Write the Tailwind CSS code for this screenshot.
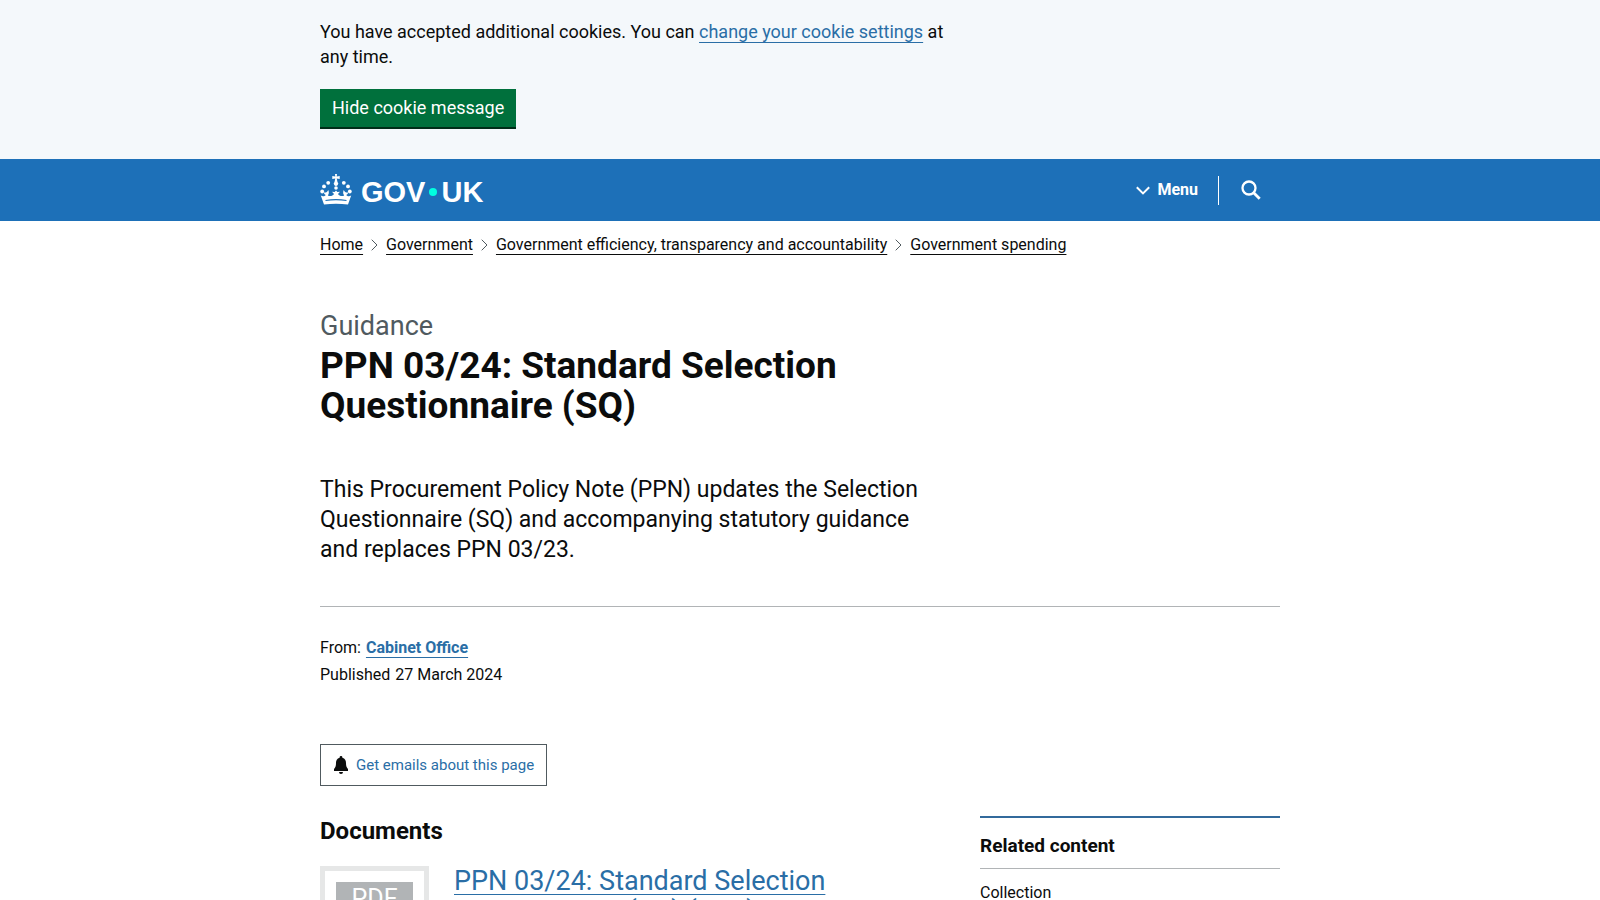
<!DOCTYPE html>
<html lang="en">
  <head>
    <meta charset="UTF-8" />
    <meta name="viewport" content="width=device-width, initial-scale=1.0" />
    <title>PPN 03/24: Standard Selection Questionnaire (SQ) - GOV.UK</title>
    <script src="https://cdn.jsdelivr.net/npm/@tailwindcss/browser@4"></script>
  </head>
  <body class="h-screen overflow-hidden bg-white font-['Roboto','Noto_Sans',sans-serif] text-[#0b0c0c]">
    <!-- Cookie banner -->
    <section class="bg-[#f4f8fb] pt-[19px] pb-8" aria-label="Cookies on GOV.UK">
      <div class="max-w-[960px] mx-auto">
        <p class="max-w-[640px] mb-5 text-lg leading-[25px]">
          You have accepted additional cookies. You can
          <a href="#" class="text-[#2a6ea6] underline decoration-1 underline-offset-4">change your cookie settings</a>
          at any time.
        </p>
        <button type="button" class="block h-[38px] px-3 pb-[2px] bg-[#00703c] text-white text-lg leading-[19px] shadow-[0_2px_0_#002d18]">
          Hide cookie message
        </button>
      </div>
    </section>

    <!-- Header -->
    <header class="bg-[#1d70b8] text-white">
      <div class="max-w-[960px] h-[62px] mx-auto flex items-center justify-between">
        <a href="#" class="flex items-center" aria-label="GOV.UK">
          <svg class="w-8 h-8 mr-[9px]" viewBox="0 0 32 32" fill="currentColor" aria-hidden="true">
            <circle cx="2.2" cy="17.5" r="1.9" />
            <circle cx="4" cy="12.4" r="1.9" />
            <circle cx="8.2" cy="8.8" r="1.9" />
            <circle cx="23.8" cy="8.8" r="1.9" />
            <circle cx="28" cy="12.4" r="1.9" />
            <circle cx="29.8" cy="17.5" r="1.9" />
            <path d="M15 0h2l-.3 2.500 3-.5v3l-3-.5.8 3.500a2.200 2.200 0 1 1-3 0l.8-3.500-3 .5V2l3 .5z" />
            <circle cx="16" cy="14" r="1.800" />
            <path d="M.8 21.500c2 1.200 3.800.8 5-.6-1.200-.4-1.800-1.200-2-2.400 2.200.3 3.700-.6 4.500-2.500 1 2.600.6 4-.5 5.500 2.500 1.200 4.700.6 6.200-1.500l-2-2.200 2.600.2L16 16.600l1.400 1.400 2.600-.2-2 2.200c1.500 2.100 3.700 2.700 6.200 1.500-1.100-1.500-1.500-2.900-.5-5.500.8 1.900 2.300 2.800 4.500 2.500-.2 1.200-.8 2-2 2.400 1.200 1.400 3 1.800 5 .6L28 30.500q-12-1.600-24 0z" />
            <path d="M5.500 26.500q10.500-1.800 21 0" fill="none" stroke="#1d70b8" stroke-width="1.200" />
          </svg>
          <span class="flex items-center pt-1 font-['Liberation_Sans',Arial,sans-serif] font-bold text-[29px] leading-[30px]">
            GOV<span class="size-2 mx-1 rounded-full bg-[#00ffe0]"></span>UK
          </span>
        </a>
        <div class="flex items-center">
          <button type="button" class="flex items-center gap-[7px] pr-5 font-bold text-base">
            <svg class="w-[14px] h-[9px]" viewBox="0 0 14 9" fill="none" stroke="currentColor" stroke-width="2" aria-hidden="true">
              <path d="M.8 1.200L7 7.400l6.200-6.200" />
            </svg>
            Menu
          </button>
          <button type="button" class="h-[29px] pl-[22px] pr-[19px] border-l border-white" aria-label="Search GOV.UK">
            <svg class="w-5 h-5" viewBox="0 0 20 20" fill="none" stroke="currentColor" stroke-width="2.300" aria-hidden="true">
              <circle cx="8" cy="8" r="6.500" />
              <path d="M12.700 12.700l6 6" stroke-width="2.800" />
            </svg>
          </button>
        </div>
      </div>
    </header>

    <div class="max-w-[960px] mx-auto">
      <!-- Breadcrumbs -->
      <nav class="pt-[14px]" aria-label="Breadcrumb">
        <ol class="flex items-center text-base leading-5">
          <li><a href="#" class="underline decoration-1 underline-offset-4">Home</a></li>
          <li class="flex items-center">
            <svg class="w-[7px] h-3 mx-2" viewBox="0 0 7 12" fill="none" stroke="#505a5f" aria-hidden="true"><path d="M.7.7L6 6 .7 11.300" /></svg>
            <a href="#" class="underline decoration-1 underline-offset-4">Government</a>
          </li>
          <li class="flex items-center">
            <svg class="w-[7px] h-3 mx-2" viewBox="0 0 7 12" fill="none" stroke="#505a5f" aria-hidden="true"><path d="M.7.7L6 6 .7 11.300" /></svg>
            <a href="#" class="underline decoration-1 underline-offset-4">Government efficiency, transparency and accountability</a>
          </li>
          <li class="flex items-center">
            <svg class="w-[7px] h-3 mx-2" viewBox="0 0 7 12" fill="none" stroke="#505a5f" aria-hidden="true"><path d="M.7.7L6 6 .7 11.300" /></svg>
            <a href="#" class="underline decoration-1 underline-offset-4">Government spending</a>
          </li>
        </ol>
      </nav>

      <main class="pt-14">
        <div class="max-w-[630px]">
          <span class="block text-[27px] leading-[30px] text-[#505a5f]">Guidance</span>
          <h1 class="mt-[5px] text-[37px] leading-10 font-bold">PPN 03/24: Standard Selection Questionnaire (SQ)</h1>
          <p class="mt-[49px] text-[23px] leading-[30px]">
            This Procurement Policy Note (PPN) updates the Selection Questionnaire (SQ) and accompanying statutory guidance and replaces PPN 03/23.
          </p>
        </div>

        <div class="mt-[41px] pt-[31px] border-t border-[#b1b4b6] text-base leading-5">
          <dl class="space-y-[7px]">
            <div class="flex gap-[5px]">
              <dt>From:</dt>
              <dd><a href="#" class="font-bold text-[#2a6ea6] underline decoration-1 underline-offset-4">Cabinet Office</a></dd>
            </div>
            <div class="flex gap-[5px]">
              <dt>Published</dt>
              <dd>27 March 2024</dd>
            </div>
          </dl>
        </div>

        <button type="button" class="mt-[59px] h-[42px] px-3 flex items-center gap-[7px] border border-[#505a5f] text-[15px] text-[#2a6ea6]">
          <svg class="w-4 h-[18px]" viewBox="0 0 16 18" fill="#0b0c0c" aria-hidden="true">
            <path d="M8 0a1.400 1.400 0 0 1 1.400 1.400v.4C12 2.500 13 4.600 13 7c0 3 .5 4.500 2 6v2H1v-2c1.500-1.500 2-3 2-6 0-2.400 1-4.500 3.600-5.200v-.4A1.400 1.400 0 0 1 8 0zM6 16h4a2 2 0 0 1-4 0z" />
          </svg>
          Get emails about this page
        </button>

        <div class="mt-[30px] flex justify-between items-start">
          <section class="w-[630px]">
            <h2 class="text-2xl leading-[30px] font-bold mb-5">Documents</h2>
            <div class="flex items-start">
              <div class="shrink-0 w-[109px] h-[150px] mr-[25px] border-5 border-[#e6e7e7] px-[11px] pt-[11px]">
                <div class="h-10 bg-[#b1b4b6] text-white text-center text-[25px] leading-[34px]">PDF</div>
              </div>
              <h3 class="max-w-[420px] text-[27px] leading-[30px]">
                <a href="#" class="text-[#2a6ea6] underline decoration-1 underline-offset-4">PPN 03/24: Standard Selection Questionnaire (SQ) (PDF)</a>
              </h3>
            </div>
          </section>

          <aside class="w-[300px] border-t-2 border-[#336a9c]">
            <h2 class="pt-[15px] pb-[10px] text-[19px] leading-[25px] font-bold border-b border-[#b1b4b6]">Related content</h2>
            <h3 class="pt-[14px] text-base leading-5">Collection</h3>
          </aside>
        </div>
      </main>
    </div>
  </body>
</html>
